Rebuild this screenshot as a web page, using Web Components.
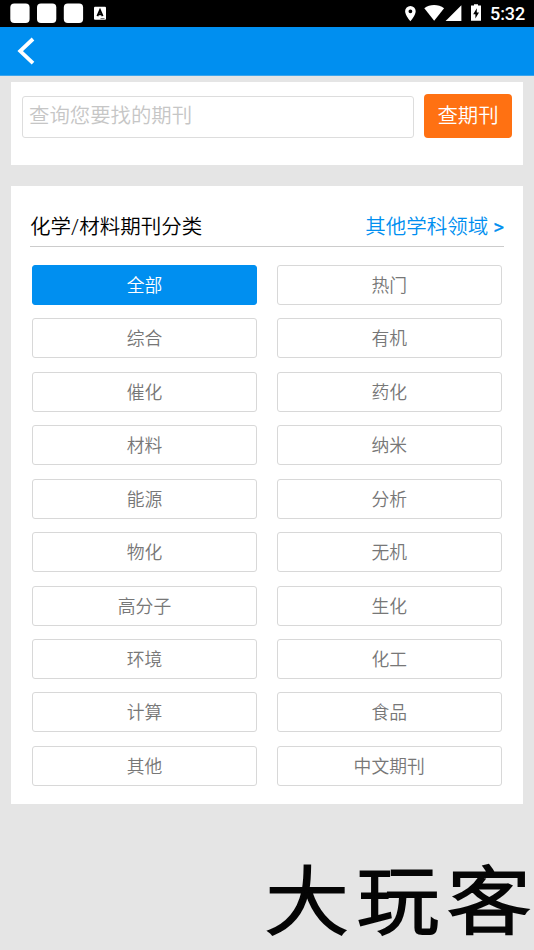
<!DOCTYPE html>
<html lang="zh-CN">
<head>
<meta charset="utf-8">
<title>期刊分类</title>
<style>
html,body{margin:0;height:100%;background:#e5e5e5;overflow:hidden}
body{font-family:Roboto,"Noto Sans CJK SC",sans-serif}
</style>
</head>
<body>
<journal-app></journal-app>
<script>
function define(name, html, setup) {
  const t = document.createElement('template');
  t.innerHTML = html;
  customElements.define(name, class extends HTMLElement {
    constructor() {
      super();
      this.attachShadow({mode: 'open'}).append(t.content.cloneNode(true));
      if (setup) setup(this.shadowRoot);
    }
  });
}

define('status-bar', `<style>
:host{display:flex;align-items:center;height:27px;box-sizing:border-box;background:#000;color:#fff;padding:0 9px 0 10px}
svg{display:block}
.right{margin-left:auto;display:flex;align-items:center}
.time{font:500 18px/27px Roboto,sans-serif;width:35px;white-space:nowrap;letter-spacing:-.1px}
</style>
<svg width="100" height="27" viewBox="10 0 100 27">
<g fill="#fff"><rect x="10.3" y="3.6" width="19.3" height="19.3" rx="4"/><rect x="37" y="3.6" width="19.3" height="19.3" rx="4"/><rect x="63.8" y="3.6" width="19.3" height="19.3" rx="4"/><rect x="94" y="6.8" width="12" height="13" rx="1"/></g>
<path d="M97.4 16.2L100 10.2l2.6 6M98.3 14.4h3.4" fill="none" stroke="#000" stroke-width="1.9"/><path d="M100.5 18.6h4" stroke="#444" stroke-width=".8"/>
</svg>
<div class="right">
<svg width="86" height="27" viewBox="404 0 86 27" fill="#fff">
<path fill-rule="evenodd" d="M410.4 6a5.3 5.3 0 0 0-5.3 5.3c0 4 5.3 10 5.3 10s5.3-6 5.3-10a5.3 5.3 0 0 0-5.3-5.3zm0 3.4a1.9 1.9 0 1 1 0 3.8 1.9 1.9 0 0 1 0-3.8z"/>
<path d="M424.3 8.2c5.6-4.2 14-4.2 19.8 0l-9.9 12.6z"/>
<path d="M461.4 5.2v15.8h-15.8z"/>
<path fill-rule="evenodd" d="M474 4.3h4v1.3h3v15.2h-10v-15.2h3zM476.8 8.2l-3.6 6h2.2v4.4l3.6-6.1h-2.2z"/>
</svg>
<span class="time">5:32</span>
</div>`);

define('nav-bar', `<style>
:host{display:flex;align-items:center;height:49px;background:#008ff0;box-sizing:border-box;padding-left:16px;border-bottom:1px solid #3ba5ed}
svg{display:block}
</style>
<svg width="20" height="30" viewBox="0 0 20 30"><path d="M17 3L4.2 15.1 17 27.2" fill="none" stroke="#fff" stroke-width="3.8"/></svg>`);

define('search-card', `<style>
:host{display:flex;gap:10px;align-items:flex-start;height:83.4px;box-sizing:border-box;background:#fff;padding:11.6px 11px 0}
.field{flex:1;margin-top:2.4px;height:42px;box-sizing:border-box;border:1px solid #ddd;border-radius:3px;padding:0 6px;font-size:20.4px;line-height:39px;color:#c6c6c6;font-weight:350}
.go{width:88px;height:44.5px;box-sizing:border-box;border-radius:4px;background:#ff7112;color:#fff;font-size:20.4px;line-height:44px;text-align:center;font-weight:350}
</style>
<div class="field">查询您要找的期刊</div><div class="go">查期刊</div>`);

define('category-item', `<style>
:host{display:block;height:40px;box-sizing:border-box;border:1px solid #d8d8d8;border-radius:3px;color:#777;background:#fff;font-size:17.8px;line-height:39px;text-align:center;font-weight:350}
:host([active]){background:#008ff0;border-color:#008ff0;color:#fff}
</style><slot></slot>`);

define('category-card', `<style>
:host{display:block;height:618px;box-sizing:border-box;background:#fff;padding:20px 19px 0}
.head{display:flex;justify-content:space-between;height:41px;box-sizing:border-box;border-bottom:1px solid #ccc;font-size:20.5px;line-height:42px;color:#000;font-weight:350}
.head span:last-child{color:#008ff0}
.head b{font-weight:400;-webkit-text-stroke:.3px #008ff0}
.grid{display:grid;grid-template-columns:225px 225px;column-gap:19.7px;row-gap:13.44px;padding:18px 2px 0}
</style>
<div class="head"><span>化学/材料期刊分类</span><span>其他学科领域 <b>&gt;</b></span></div>
<div class="grid"></div>`, root => {
  const names = '全部 热门 综合 有机 催化 药化 材料 纳米 能源 分析 物化 无机 高分子 生化 环境 化工 计算 食品 其他 中文期刊'.split(' ');
  const grid = root.querySelector('.grid');
  names.forEach((name, i) => {
    const item = document.createElement('category-item');
    item.textContent = name;
    if (i === 0) item.setAttribute('active', '');
    grid.append(item);
  });
});

define('brand-mark', `<style>
:host{display:block;font:300 82px/84px "Noto Sans CJK SC",sans-serif;letter-spacing:9px;color:#050505;white-space:nowrap;-webkit-text-stroke:3.4px #050505;transform:scaleY(.9);transform-origin:0 0}
</style>大玩客`);

define('journal-app', `<style>
:host{display:flex;flex-direction:column;position:relative;height:950px;width:534px;background:#e5e5e5;overflow:hidden}
search-card{margin:6px 11px 0}
category-card{margin:20.6px 11px 0}
brand-mark{position:absolute;left:266px;top:859px}
</style>
<status-bar></status-bar><nav-bar></nav-bar><search-card></search-card><category-card></category-card><brand-mark></brand-mark>`);
</script>
</body>
</html>
